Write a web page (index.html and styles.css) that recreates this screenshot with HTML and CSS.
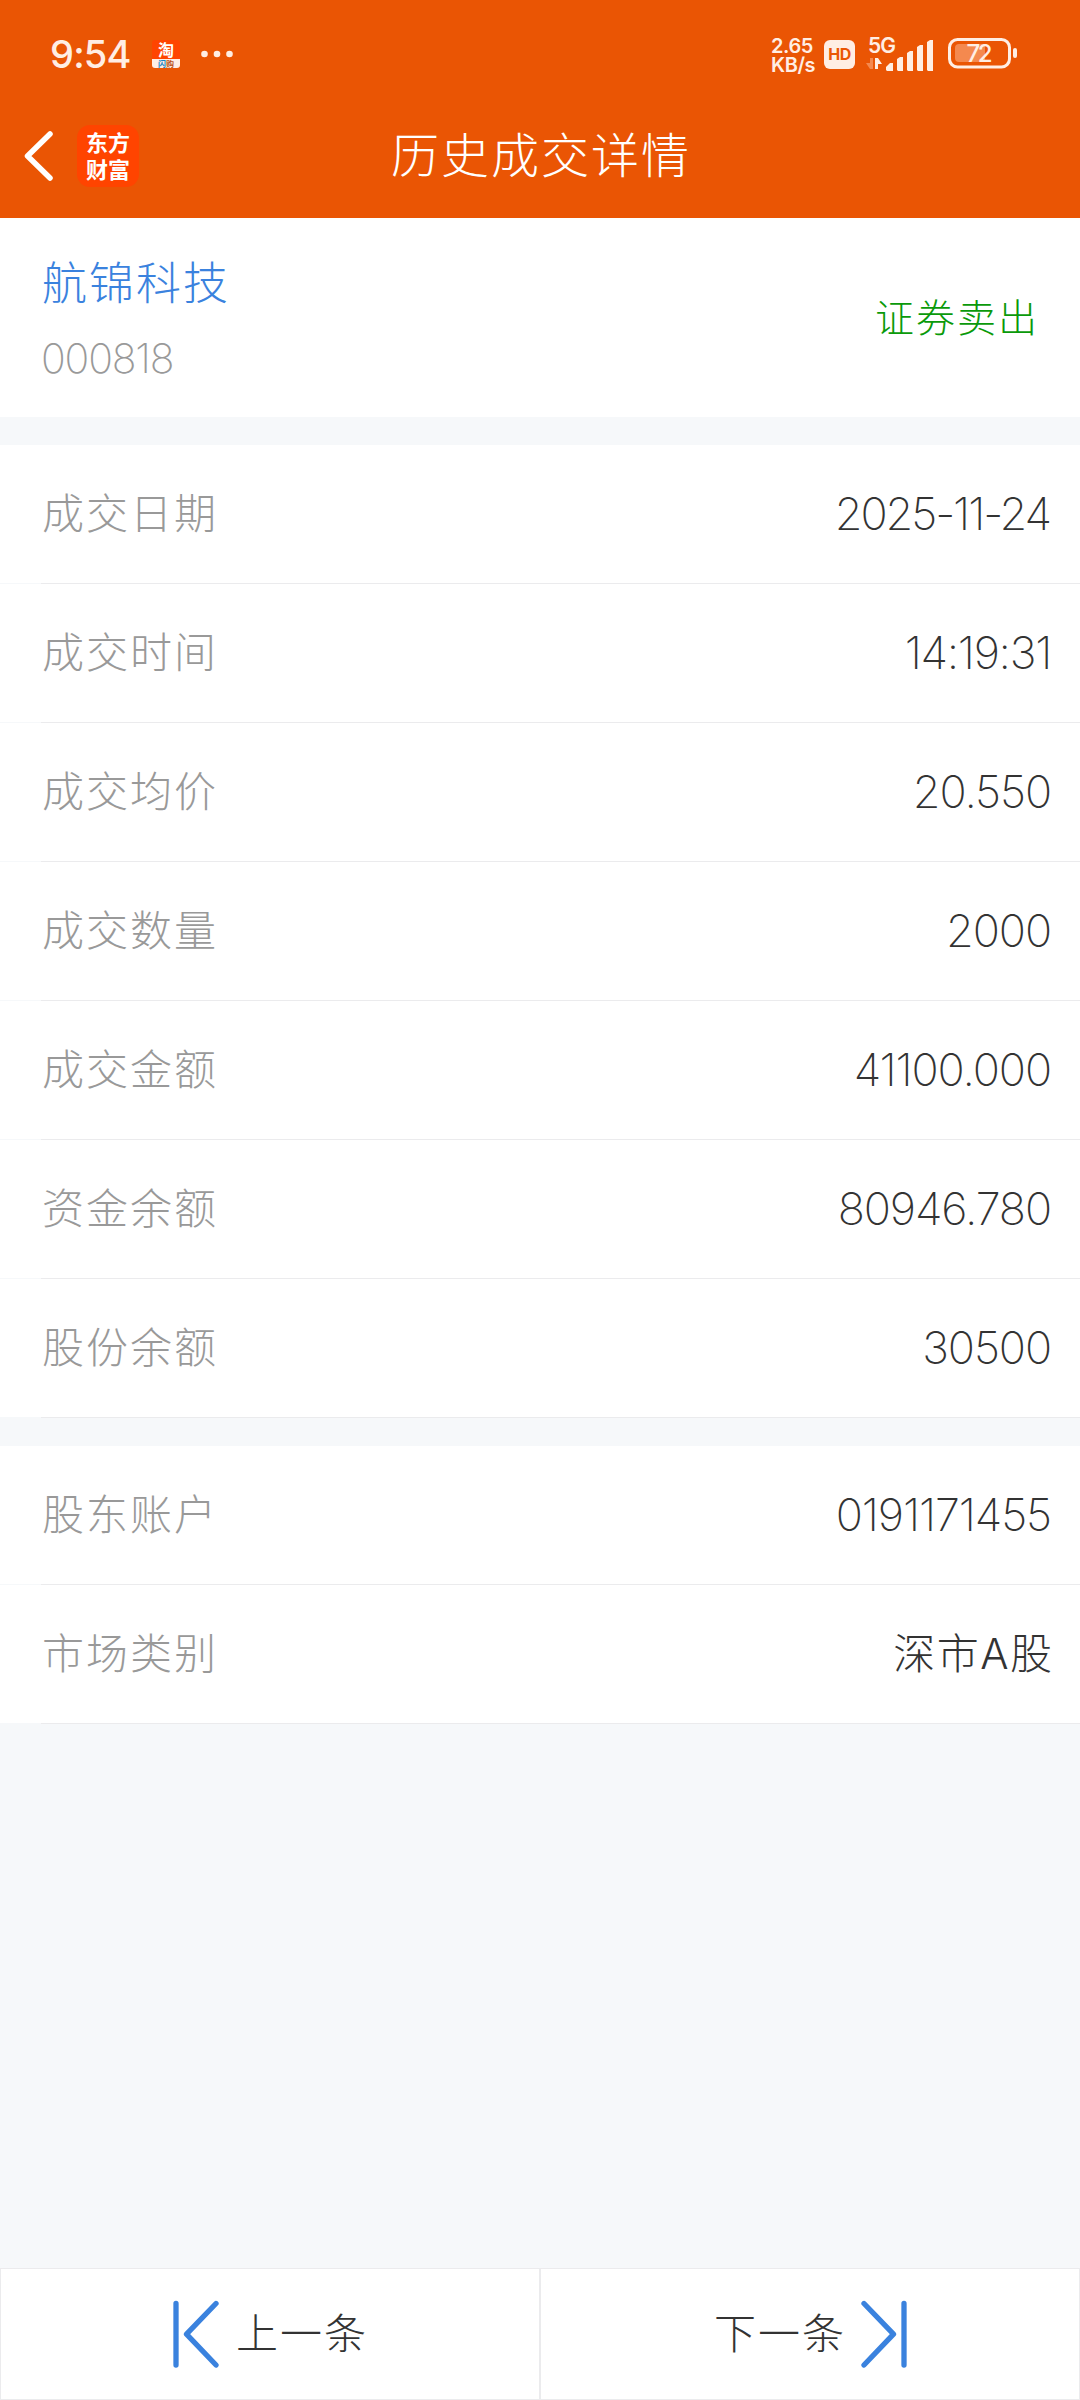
FILE: index.html
```html
<!DOCTYPE html>
<html lang="zh-CN">
<head>
<meta charset="utf-8">
<title>历史成交详情</title>
<link rel="stylesheet" href="styles.css">
</head>
<body>
<div class="screen">
  <header class="header">
    <div class="status">
      <span class="clock">9:54</span>
      <span class="tao"><span class="tao-top">淘</span><span class="tao-bottom"><i>闪</i>购</span></span>
      <svg class="dots" width="32" height="8" viewBox="0 0 32 8"><circle cx="3.5" cy="4" r="3.3"/><circle cx="16" cy="4" r="3.3"/><circle cx="28.5" cy="4" r="3.3"/></svg>
      <span class="net"><span>2.65</span><span>KB/s</span></span>
      <span class="hd">HD</span>
      <svg class="signal" width="68" height="36" viewBox="0 0 68 36">
        <text class="signal-text" x="2" y="17" textLength="28">5G</text>
        <path class="faint" d="M7 22v11h-3l-4-6h4v-5z"/>
        <path d="M9 33v-11h3l4 6h-4v5z"/>
        <path d="M20 34v-3l4-4h3v8h-6zM31 34v-11l3-2h3v14h-5zM41 34v-17l3-2h3v20h-5zM51 34v-23l3-2h3v26h-5zM61 34v-28l3-2h3v31h-5z"/>
      </svg>
      <svg class="battery" width="70" height="32" viewBox="0 0 70 32">
        <rect class="battery-shell" x="1.500" y="1.500" width="60" height="27.500" rx="8"/>
        <path class="faint" d="M11 6h26v18h-26q-4 0-4-4v-10q0-4 4-4z"/>
        <rect x="65" y="10" width="4" height="10" rx="2"/>
        <text class="battery-text" x="18.500" y="24" textLength="26">72</text>
      </svg>
    </div>
    <div class="titlebar">
      <div class="nav">
        <svg class="back" width="30" height="50" viewBox="0 0 30 50"><path d="M26 3L3.500 25L26 47"/></svg>
        <span class="logo"><span>东方</span><span>财富</span></span>
      </div>
      <h1 class="title">历史成交详情</h1>
    </div>
  </header>

  <section class="stock">
    <div class="stock-id">
      <span class="stock-name">航锦科技</span>
      <span class="stock-code">000818</span>
    </div>
    <span class="side">证券卖出</span>
  </section>

  <section class="rows">
    <div class="row"><span class="label">成交日期</span><span class="value date">2025-11-24</span></div>
    <div class="row"><span class="label">成交时间</span><span class="value time">14:19:31</span></div>
    <div class="row"><span class="label">成交均价</span><span class="value">20.550</span></div>
    <div class="row"><span class="label">成交数量</span><span class="value">2000</span></div>
    <div class="row"><span class="label">成交金额</span><span class="value">41100.000</span></div>
    <div class="row"><span class="label">资金余额</span><span class="value">80946.780</span></div>
    <div class="row"><span class="label">股份余额</span><span class="value">30500</span></div>
  </section>

  <section class="rows">
    <div class="row"><span class="label">股东账户</span><span class="value">0191171455</span></div>
    <div class="row"><span class="label">市场类别</span><span class="value market">深市A股</span></div>
  </section>

  <footer class="pager">
    <div class="page-button prev">
      <svg width="47" height="68" viewBox="0 0 47 68"><path d="M3 3.500V65M43 3.500L13.500 34.200L43 65"/></svg>
      <span>上一条</span>
    </div>
    <div class="page-button next">
      <span>下一条</span>
      <svg width="47" height="68" viewBox="0 0 47 68"><path d="M44 3.500V65M4 3.500L33.500 34.200L4 65"/></svg>
    </div>
  </footer>
</div>
</body>
</html>
```
FILE: styles.css
```css
* { box-sizing: border-box; }
body { margin: 0; font-family: Inter, "Noto Sans CJK SC", sans-serif; font-weight: 300; }
.screen { width: 1080px; height: 2400px; display: flex; flex-direction: column; background: #f6f8fa; white-space: nowrap; }

.header { height: 218px; background: #ea5504; color: #fff; }
.status { height: 108px; padding-left: 50px; display: flex; align-items: center; color: #ffeee4; }
.status svg { fill: #ffeee4; overflow: visible; }
.clock { width: 102px; font: 500 38px/44px Inter, sans-serif; letter-spacing: -.8px; }
.tao { width: 28px; height: 28px; border-radius: 3px; display: flex; flex-direction: column; background: #ff4400; color: #fff; font-family: "Noto Sans CJK SC", sans-serif; text-align: center; }
.tao-top { height: 19px; font-size: 16px; line-height: 19px; font-weight: 700; }
.tao-bottom { height: 9px; border-radius: 0 0 3px 3px; background: #ffeee4; color: #b8501c; font-size: 8px; line-height: 9px; font-weight: 700; }
.tao-bottom i { color: #1685c5; font-style: normal; }
.dots { margin-left: 21px; }
.net { width: 46px; margin-left: 538px; display: flex; flex-direction: column; font: 600 20px/19px Inter, sans-serif; letter-spacing: -.4px; padding-top: 3px; }
.hd { width: 31px; height: 29px; margin-left: 7px; border-radius: 6px; background: #ffeee4; color: #ea5504; font: 700 16px/29px Inter, sans-serif; text-align: center; letter-spacing: -.5px; }
.signal { margin-left: 11px; }
.signal-text { font: 600 21px Inter, sans-serif; }
.status .faint { fill: #f4894f; }
.battery { margin-left: 14px; }
.status .battery-shell { fill: none; stroke: #ffeee4; stroke-width: 3; }
.battery-text { font: 500 24px Inter, sans-serif; }

.titlebar { height: 96px; padding: 0 22px 0 24px; display: grid; grid-template-columns: 1fr auto 1fr; align-items: center; }
.nav { display: flex; align-items: center; gap: 23px; }
.back { fill: none; stroke: #fff; stroke-width: 5.500; stroke-linecap: round; stroke-linejoin: round; }
.logo { width: 62px; height: 62px; padding-bottom: 3px; border-radius: 13px; background: #ff4400; display: flex; flex-direction: column; justify-content: center; align-items: center; font: 700 22px/27px "Noto Sans CJK SC", sans-serif; }
.title { margin: 0; font-size: 48px; line-height: 70px; letter-spacing: 2px; font-weight: 300; }

.stock { height: 199px; padding: 0 41px 0 42px; display: flex; align-items: center; justify-content: space-between; background: #fff; }
.stock-id { display: flex; flex-direction: column; padding-top: 2px; }
.stock-name { font-size: 45px; line-height: 68px; letter-spacing: 2px; color: #3a82de; }
.stock-code { margin: 10px 0 0 -1px; font-size: 41px; line-height: 60px; font-weight: 250; color: #999; letter-spacing: -1.200px; }
.side { font-size: 39px; line-height: 60px; letter-spacing: 2px; color: #0a9a0a; }

.rows { margin-top: 28px; background: #fff; }
.row { height: 139px; padding: 0 28px 2px 42px; display: flex; align-items: center; justify-content: space-between; background: linear-gradient(to right, #f6f8fa 41px, #ebebed 41px) 0 100% / 100% 1px no-repeat #fff; }
.label { font-size: 42px; line-height: 64px; letter-spacing: 2px; color: #999; }
.value { margin-right: 1px; font-size: 45px; line-height: 64px; font-weight: 250; letter-spacing: -1.100px; color: #333; }
.date { letter-spacing: -2.100px; margin-right: 2px; }
.time { letter-spacing: -1.300px; }
.market { margin-right: -1.500px; font-size: 42px; font-weight: 300; letter-spacing: 1.500px; }

.pager { height: 132px; margin-top: auto; display: grid; grid-template-columns: 540px 540px; background: #fff; }
.page-button { border: 1px solid #ebebed; display: flex; align-items: center; color: #333; font-size: 42px; line-height: 60px; letter-spacing: 2px; }
.page-button svg { margin-bottom: 1px; fill: none; stroke: #3a82de; stroke-width: 5.300; stroke-linecap: round; stroke-linejoin: round; }
.prev { padding-left: 172px; gap: 16px; }
.next { padding-left: 173px; gap: 14px; }
```
